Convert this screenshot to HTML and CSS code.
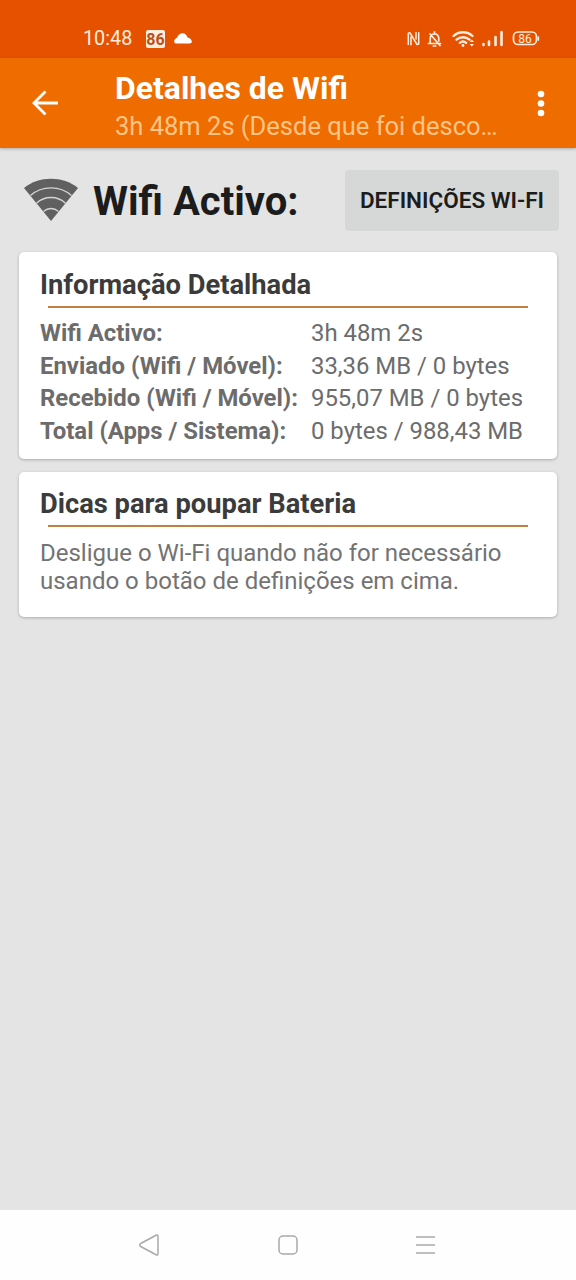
FILE: index.html
```html
<!DOCTYPE html>
<html lang="pt">
<head>
<meta charset="utf-8">
<title>Detalhes de Wifi</title>
<link rel="stylesheet" href="styles.css">
</head>
<body>
<div class="screen">
  <div class="status">
    <span class="clock">10:48</span>
    <span class="badge">86</span>
    <svg class="cloud" width="18" height="12" viewBox="0 0 18 12"><path d="M3 11.500C.8 11.500 0 10.300.2 8.900.5 7.500 1.800 6.300 3 5.800 4 2.800 6.200 1.200 8.500 1.200c2.600 0 4.300 1.600 5 4.300 2.300.4 4 1.900 4.300 3.800.2 1.400-.8 2.200-2.500 2.200z" fill="#fff"/></svg>
    <svg class="tray" width="138" height="22" viewBox="0 0 138 22" fill="none" stroke="#ffeedd" stroke-width="1.700" stroke-linecap="round" stroke-linejoin="round">
      <path d="M1.300 16.500V5.200l1.700-.4L10 16.500l1.700-.4V4.800M4 16.700V9M9 4.500V11" stroke-width="1.500"/>
      <path d="M21.500 15.500H33.500M23.200 15.200V11c0-2.800 1.500-5 4.300-5 2.500 0 4.300 2 4.300 5v2M27.500 3.800V6M26.300 18h2.400M23 6l10 11.500"/>
      <g stroke-width="2.300"><path d="M46.500 8c5.300-5 13.700-5 19 0M49.500 11.700c3.700-3.300 9.300-3.300 13 0M52.800 14.900c1.900-1.600 4.500-1.600 6.400 0"/></g>
      <circle cx="56" cy="17.500" r="1.400" fill="#ffeedd" stroke="none"/>
      <path d="m62.600 14 2.200-2.500 2.200 2.500zM62.600 16l2.200 2.500 2.200-2.500z" fill="#ffeedd" stroke="none"/>
      <path d="M76.500 17v-1M82 17v-3.500M88.500 17V9M94.500 17V4" stroke-width="2.600"/>
      <rect x="106.500" y="4" width="23" height="12.500" rx="4.500"/>
      <path d="M131.300 9v3"/>
      <text x="118" y="14.700" class="battery">86</text>
    </svg>
  </div>
  <header class="appbar">
    <svg class="back" width="28" height="28" viewBox="0 0 28 28" fill="none" stroke="#fff" stroke-width="2.800"><path d="M27 14H3M14.500 2.500 3 14l11.500 11.500"/></svg>
    <div class="titles">
      <h1 class="title">Detalhes de Wifi</h1>
      <p class="subtitle">3h 48m 2s (Desde que foi desco…</p>
    </div>
    <svg class="more" width="8" height="28" viewBox="0 0 8 28" fill="#fff"><circle cx="4" cy="5" r="3.300"/><circle cx="4" cy="14.500" r="3.300"/><circle cx="4" cy="24" r="3.300"/></svg>
  </header>
  <main class="content">
    <section class="summary">
      <svg class="wifi" width="56" height="44" viewBox="0 0 56 44"><path d="M1 10C16-2.300 40-2.300 55 10L28 43z" fill="#606060"/><path d="M7.500 17.500C19 7.300 37 7.300 48.500 17.500M13.500 25.200C21.500 17.600 34.500 17.600 42.500 25.200M20.500 33.500c4.500-4 10.500-4 15 0" fill="none" stroke="#d5d5d5" stroke-width="1.300"/></svg>
      <h2 class="headline">Wifi Activo:</h2>
      <button class="settings">DEFINIÇÕES WI-FI</button>
    </section>
    <section class="card details">
      <h3 class="card-title">Informação Detalhada</h3>
      <dl class="stats">
        <dt>Wifi Activo:</dt><dd>3h 48m 2s</dd>
        <dt>Enviado (Wifi / Móvel):</dt><dd>33,36 MB / 0 bytes</dd>
        <dt>Recebido (Wifi / Móvel):</dt><dd>955,07 MB / 0 bytes</dd>
        <dt>Total (Apps / Sistema):</dt><dd>0 bytes / 988,43 MB</dd>
      </dl>
    </section>
    <section class="card tips">
      <h3 class="card-title">Dicas para poupar Bateria</h3>
      <p class="tip">Desligue o Wi-Fi quando não for necessário<br>usando o botão de definições em cima.</p>
    </section>
  </main>
  <nav class="navbar">
    <svg width="22" height="22" viewBox="0 0 22 22" class="nav-icon"><path d="M17.500 1 1.700 9.500q-2.200 1.500 0 3L17.500 21q1.500.5 1.500-1V2q0-1.500-1.500-1z"/></svg>
    <svg width="22" height="22" viewBox="0 0 22 22" class="nav-icon"><rect x="2" y="2" width="18" height="18" rx="4"/></svg>
    <svg width="22" height="22" viewBox="0 0 22 22" class="nav-icon"><path d="M1 3h19M1 11h19M1 19h19"/></svg>
  </nav>
</div>
</body>
</html>
```
FILE: styles.css
```css
* { box-sizing: border-box; }
body { margin: 0; font-family: Roboto, sans-serif; }
h1, h2, h3, p, dl, dd { margin: 0; }
svg { display: block; flex: none; }
.screen { display: flex; flex-direction: column; width: 576px; height: 1280px; background: #e4e4e4; white-space: nowrap; }
.status { display: flex; align-items: center; height: 58px; padding: 19px 37px 0 83px; background: #e65100; color: #ffeedd; }
.clock { width: 49px; font-size: 19.8px; line-height: 24px; }
.badge { width: 19px; height: 18px; margin-left: 14px; border-radius: 2px; background: #ffeedd; color: #b8501c; font-size: 16px; font-weight: 700; line-height: 19px; text-align: center; }
.cloud { margin-left: 9px; margin-top: -1px; }
.tray { margin-left: auto; margin-right: -6px; }
.battery { font-size: 12px; fill: #ffeedd; stroke: none; text-anchor: middle; }
.appbar { display: flex; align-items: center; height: 90px; padding: 0 31px; background: #ef6c00; box-shadow: 0 1px 3px rgba(0, 0, 0, .25); z-index: 1; }
.titles { width: 400px; margin-left: 56px; padding-top: 7px; }
.title { color: #fff; font-size: 31.95px; font-weight: 700; line-height: 40px; }
.subtitle { color: #ffc586; font-size: 25.5px; line-height: 37px; }
.more { margin-left: auto; }
.content { flex: 1; padding: 0 19px; }
.summary { display: flex; align-items: center; height: 104px; padding-left: 4px; margin-right: -2px; }
.headline { margin-left: 14px; padding-top: 4px; color: #1c1c1c; font-size: 40px; font-weight: 700; line-height: 48px; }
.settings { width: 214px; height: 61px; margin-left: auto; padding: 0; border: 0; border-radius: 4px; background: #d6d7d7; color: #1c1c1c; font: 600 22.5px Roboto, sans-serif; white-space: nowrap; }
.card { padding: 15px 21px 0; border-radius: 5px; background: #fff; box-shadow: 0 1px 3px rgba(0, 0, 0, .25); }
.details { height: 207px; margin-bottom: 13px; }
.tips { height: 145px; padding-top: 14px; }
.card-title { color: #3b3b3b; font-size: 27.3px; font-weight: 700; line-height: 36px; }
.card-title::after { content: ""; display: block; width: 480px; height: 2px; margin: 3px 0 0 8px; background: #c08040; }
.stats { display: grid; grid-template-columns: 271px 1fr; margin-top: 9px; color: #6c6c6c; font-size: 23.9px; line-height: 32.600px; }
.stats dt { font-weight: 700; }
.tip { margin-top: 12px; color: #737373; font-size: 24px; line-height: 28px; }
.navbar { display: flex; justify-content: space-between; align-items: center; height: 70px; padding: 0 139px; background: #fefefe; }
.nav-icon { fill: none; stroke: #a9a9a9; stroke-width: 1.500; }
```
